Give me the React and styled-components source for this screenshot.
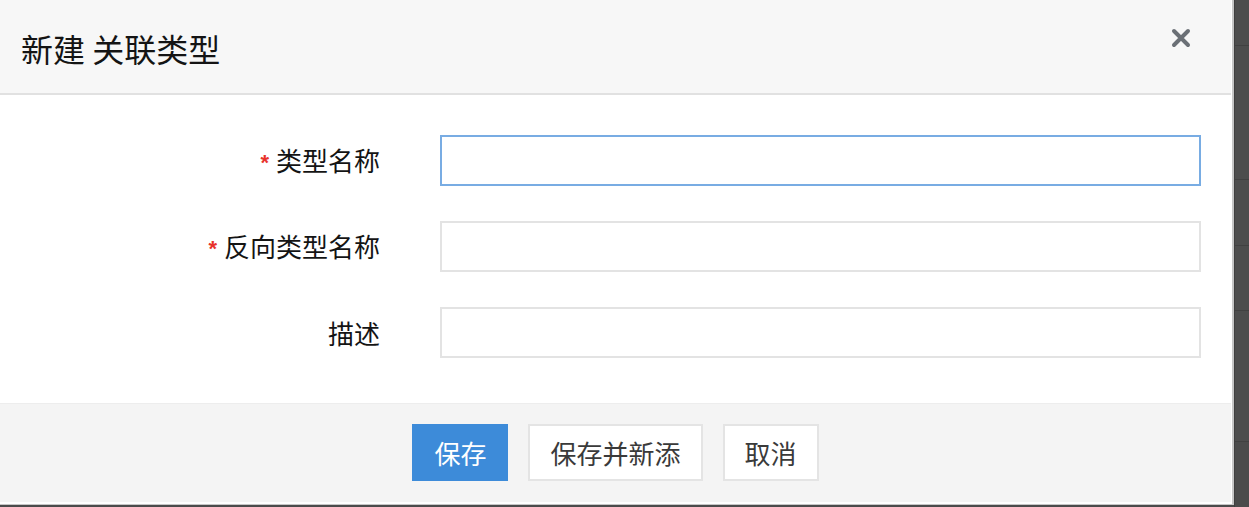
import React from "react";
import styled, { createGlobalStyle } from "styled-components";

const Global = createGlobalStyle`
  html, body { margin: 0; padding: 0; background: #4b4b4b; overflow: hidden; }
  body { font-family: "Noto Sans CJK SC", "Noto Sans", sans-serif; }
  * { box-sizing: border-box; }
`;

const Page = styled.div`
  display: flex;
  align-items: flex-start;
  width: 1249px;
  height: 507px;
  background: #4b4b4b;
`;

const Modal = styled.div`
  flex: 0 0 auto;
  box-sizing: content-box;
  width: 1231px;
  height: 502px;
  padding: 0 1px 2px 0;
  border-right: 2px solid #c6c6c6;
  border-bottom: 1px solid #c6c6c6;
  background: #fff;
  display: flex;
  flex-direction: column;
`;

const Header = styled.div`
  height: 95px;
  flex: 0 0 auto;
  background: #f7f7f7;
  border-bottom: 2px solid #e1e1e1;
  padding: 0 40px 0 21px;
  display: flex;
  justify-content: space-between;
  align-items: center;
`;

const Title = styled.h2`
  margin: 0;
  font-size: 32px;
  font-weight: 400;
  line-height: 1;
  color: #141414;
  padding-top: 2px;
`;

const Close = styled.button`
  align-self: flex-start;
  margin-top: 28px;
  width: 20px;
  height: 20px;
  padding: 0;
  border: 0;
  background: transparent;
  display: flex;
  cursor: pointer;
`;

const Body = styled.div`
  flex: 1;
  display: flex;
  flex-direction: column;
  gap: 35px;
  padding-top: 40px;
`;

const Row = styled.div`
  display: grid;
  grid-template-columns: 380px 761px;
  column-gap: 60px;
  align-items: center;
`;

const Label = styled.label`
  text-align: right;
  font-size: 26px;
  line-height: 1;
  color: #141414;
  white-space: nowrap;
`;

const Star = styled.span`
  color: #e8322b;
  font-family: "Liberation Sans", sans-serif;
  font-weight: 700;
  font-size: 22px;
  margin-right: 7px;
  position: relative;
  top: -1px;
`;

const Input = styled.input`
  height: 51px;
  width: 100%;
  border: 2px solid ${(p) => (p.$active ? "#78ace3" : "#e3e3e3")};
  background: #fff;
  outline: none;
  padding: 0 12px;
  font-size: 20px;
  font-family: inherit;
`;

const Footer = styled.div`
  flex: 0 0 99px;
  background: #f4f4f4;
  border-top: 1px solid #ededed;
  display: flex;
  justify-content: center;
  align-items: center;
  gap: 20px;
  padding-bottom: 1px;
`;

const Button = styled.button`
  height: 57px;
  padding: 0 20px;
  font-family: "Noto Sans CJK SC", sans-serif;
  font-size: 26px;
  line-height: 1;
  border: 2px solid ${(p) => (p.$primary ? "#3d8bd9" : "#e4e4e4")};
  background: ${(p) => (p.$primary ? "#3d8bd9" : "#fff")};
  color: ${(p) => (p.$primary ? "#fff" : "#3a3a3a")};
  display: flex;
  align-items: center;
  cursor: pointer;
`;

const Side = styled.div`
  flex: 1;
  height: 507px;
  display: flex;
  flex-direction: column;
  border-left: 1px solid #3f3f3f;
`;

const SideRow = styled.div`
  flex: 0 0 ${(p) => p.$h}px;
  border-bottom: 1px solid #414141;
  background: #4d4d4d;
`;

const fields = [
  { label: "类型名称", required: true, active: true },
  { label: "反向类型名称", required: true },
  { label: "描述" },
];

export default function App() {
  return (
    <>
      <Global />
      <Page>
        <Modal>
          <Header>
            <Title>新建 关联类型</Title>
            <Close aria-label="close">
              <svg width="20" height="20" viewBox="0 0 20 20">
                <path
                  d="M3 3 L17 17 M17 3 L3 17"
                  stroke="#6b7076"
                  strokeWidth="4"
                  strokeLinecap="round"
                  fill="none"
                />
              </svg>
            </Close>
          </Header>
          <Body>
            {fields.map((f) => (
              <Row key={f.label}>
                <Label>
                  {f.required && <Star>*</Star>}
                  {f.label}
                </Label>
                <Input $active={f.active} />
              </Row>
            ))}
          </Body>
          <Footer>
            <Button $primary>保存</Button>
            <Button>保存并新添</Button>
            <Button>取消</Button>
          </Footer>
        </Modal>
        <Side>
          <SideRow $h={46} />
          <SideRow $h={134} />
          <SideRow $h={66} />
          <SideRow $h={65} />
          <SideRow $h={131} />
        </Side>
      </Page>
    </>
  );
}
